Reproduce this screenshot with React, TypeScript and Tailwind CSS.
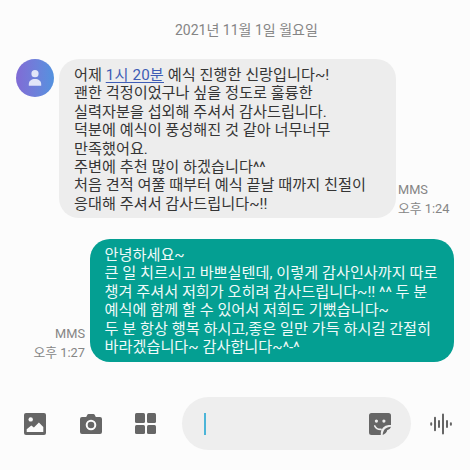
import type { ReactNode } from 'react';

const received: ReactNode[] = [
  <>
    어제{' '}
    <a className="tracking-[0.15px] text-[#3f5db5] underline decoration-1 underline-offset-2">1시 20분</a>{' '}
    예식 진행한 신랑입니다~!
  </>,
  '괜한 걱정이었구나 싶을 정도로 훌륭한',
  '실력자분을 섭외해 주셔서 감사드립니다.',
  '덕분에 예식이 풍성해진 것 같아 너무너무',
  '만족했어요.',
  '주변에 추천 많이 하겠습니다^^',
  '처음 견적 여쭐 때부터 예식 끝날 때까지 친절이',
  '응대해 주셔서 감사드립니다~!!',
];

const sent: ReactNode[] = [
  '안녕하세요~',
  '큰 일 치르시고 바쁘실텐데, 이렇게 감사인사까지 따로',
  '챙겨 주셔서 저희가 오히려 감사드립니다~!! ^^ 두 분',
  '예식에 함께 할 수 있어서 저희도 기뻤습니다~',
  '두 분 항상 행복 하시고,좋은 일만 가득 하시길 간절히',
  '바라겠습니다~ 감사합니다~^-^',
];

function Lines({ lines }: { lines: ReactNode[] }) {
  return (
    <>
      {lines.map((line, i) => (
        <p key={i} className="whitespace-nowrap">
          {line}
        </p>
      ))}
    </>
  );
}

function Stamp({ time, className }: { time: string; className: string }) {
  return (
    <div className={`text-[12.8px] leading-[18.5px] whitespace-nowrap text-[#858585] ${className}`}>
      <p>MMS</p>
      <p>{time}</p>
    </div>
  );
}

function Avatar() {
  return (
    <div className="flex size-[38px] shrink-0 items-center justify-center rounded-full bg-linear-to-r from-[#806bd5] to-[#5292df]">
      <svg viewBox="0 0 14 16" className="h-4 w-3.5 fill-[#e1e5f8]">
        <circle cx="7" cy="3.7" r="3.6" />
        <path d="M.8 15.8v-1.7C.8 11 3.5 9 7 9s6.2 2 6.2 5.1v1.7z" />
      </svg>
    </div>
  );
}

function ImageIcon() {
  return (
    <svg viewBox="0 0 22 22" className="size-[22px]">
      <rect width="22" height="22" rx="2" fill="#666" />
      <circle cx="6.7" cy="6.4" r="2.2" fill="#fcfcfc" />
      <path d="M2.7 18.9v-2.6l4.6-3.8 2.6 2 5-5 4.4 4.6v4.8z" fill="#fcfcfc" />
    </svg>
  );
}

function CameraIcon() {
  return (
    <svg viewBox="0 0 22 20" className="h-5 w-[22px]">
      <path
        d="M2 3h4.2l1-2Q7.6 0 8.6 0h4.8q1 0 1.4 1l1 2H20q2 0 2 2v13q0 2-2 2H2q-2 0-2-2V5q0-2 2-2z"
        fill="#666"
      />
      <circle cx="11" cy="11" r="4.3" fill="none" stroke="#fcfcfc" strokeWidth="2" />
    </svg>
  );
}

function GridIcon() {
  return (
    <div className="grid size-[21px] grid-cols-2 gap-[2px]">
      <span className="rounded-[1.5px] bg-[#666]" />
      <span className="rounded-[1.5px] bg-[#666]" />
      <span className="rounded-[1.5px] bg-[#666]" />
      <span className="rounded-[1.5px] bg-[#666]" />
    </div>
  );
}

function StickerIcon() {
  return (
    <svg viewBox="0 0 22 22" className="size-[22px]">
      <path
        d="M2.5 0h17Q22 0 22 2.5V12h-2.2q-7.3 1-8 7.7V22H2.5Q0 22 0 19.5v-17Q0 0 2.5 0z"
        fill="#666"
      />
      <path d="M13.7 22c.2-4.9 3-8 8.3-8.2-.6 1.7-1.3 2.5-3.7 3.3-.7 2.5-1.8 3.9-4.6 4.9z" fill="#666" />
      <circle cx="7.4" cy="8.1" r="1.6" fill="#eee" />
      <circle cx="14.9" cy="8.1" r="1.6" fill="#eee" />
      <path d="M5.8 13q1.7 3.6 6.2 3.4" fill="none" stroke="#eee" strokeWidth="1.7" strokeLinecap="round" />
    </svg>
  );
}

function VoiceIcon() {
  return (
    <svg viewBox="0 0 22 22" className="size-[22px]" stroke="#666" strokeWidth="2" strokeLinecap="round">
      <path d="M1.2 10.2v1.6M5 4.8v12.4M9 8v6M13 1.4v19.2M17 8v6M20.9 10.2v1.6" />
    </svg>
  );
}

export default function App() {
  return (
    <div className="flex h-[470px] w-[470px] flex-col overflow-hidden bg-[#fcfcfc] font-[Roboto,'Noto_Sans_CJK_KR',sans-serif]">
      <p className="mt-5 h-5 pl-[175px] text-[14px] leading-5 whitespace-nowrap text-[#858585]">
        2021년 11월 1일 월요일
      </p>

      <div className="mt-[19px] flex h-[159px] pl-4">
        <Avatar />
        <div className="ml-[5px] w-[337px] shrink-0 rounded-[20px] bg-[#ededed] pt-[7px] pl-[15px] text-[15.2px] leading-[18.4px] text-[#353535]">
          <Lines lines={received} />
        </div>
        <Stamp time="오후 1:24" className="ml-[2px] self-end" />
      </div>

      <div className="mt-[21px] flex h-[123px] justify-end pr-4">
        <Stamp time="오후 1:27" className="mr-[5px] self-end text-right" />
        <div className="w-[364px] shrink-0 rounded-[20px] bg-[#049f92] pt-[7px] pl-[14.5px] text-[15.2px] leading-[18.4px] text-[#f0faf9]">
          <Lines lines={sent} />
        </div>
      </div>

      <div className="mt-[35px] flex h-[53px] items-center pl-6">
        <ImageIcon />
        <div className="ml-[34px]">
          <CameraIcon />
        </div>
        <div className="ml-[33px]">
          <GridIcon />
        </div>
        <div className="ml-[26px] flex h-[53px] w-[229px] items-center justify-between rounded-full bg-[#eee] pr-[20px] pl-[22px]">
          <span className="h-[22px] w-[2px] bg-[#4cb5d8]" />
          <StickerIcon />
        </div>
        <div className="ml-[19px]">
          <VoiceIcon />
        </div>
      </div>
    </div>
  );
}
